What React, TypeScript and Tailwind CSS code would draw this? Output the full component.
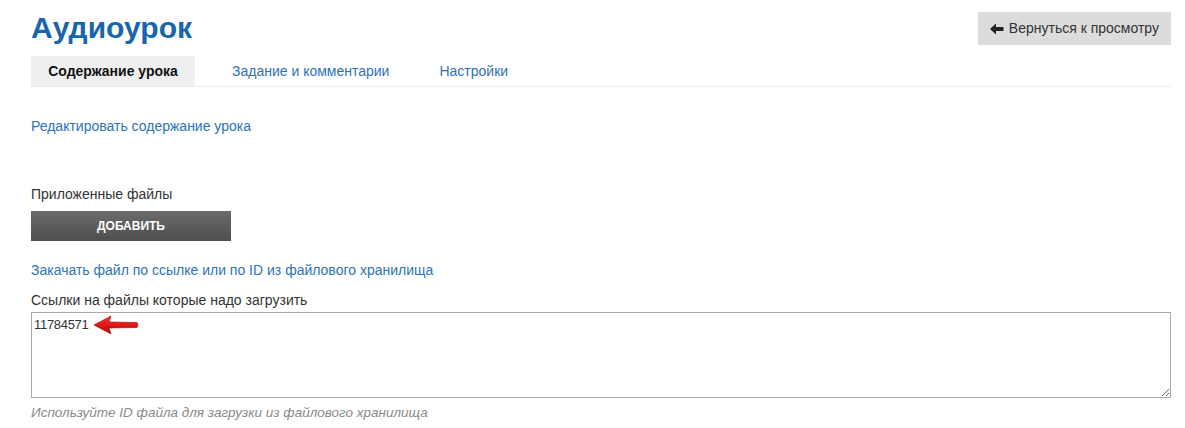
import React from 'react'

const tabs = [
  { label: 'Содержание урока', active: true, cls: '' },
  { label: 'Задание и комментарии', active: false, cls: 'ml-[37px]' },
  { label: 'Настройки', active: false, cls: 'ml-[50px]' },
]

function RedArrow() {
  return (
    <svg width="46" height="20" viewBox="0 0 46 20" className="absolute left-[62px] top-[3px]">
      <defs>
        <linearGradient id="ra" x1="0" y1="0" x2="0" y2="1">
          <stop offset="0" stopColor="#ff3030" />
          <stop offset="1" stopColor="#c00000" />
        </linearGradient>
      </defs>
      <path
        d="M1 10 L18 1 L16 7 L44 7.5 L45 10 L44 12.5 L16 13 L18 19 Z"
        fill="url(#ra)"
        stroke="#a80000"
        strokeWidth="0.6"
        strokeLinejoin="round"
      />
    </svg>
  )
}

export default function App() {
  return (
    <div className="min-h-[428px] bg-white pl-[31px] pr-[14px] text-[14px] text-[#333]" style={{ fontFamily: '"Liberation Sans", Arial, sans-serif' }}>
      {/* Header */}
      <div className="flex items-start justify-between pt-[10px]">
        <h1 className="mt-[1px] text-[30px] font-bold leading-[34px] text-[#1766ad]">Аудиоурок</h1>
        <button className="mt-[2px] flex h-[33px] items-center gap-[5px] bg-[#dcdcdc] px-[12px] text-[14px] text-[#333]">
          <svg width="14" height="12" viewBox="0 0 14 12">
            <path d="M0 6 L6 0.5 L6 4 L13.5 4 L13.5 8 L6 8 L6 11.5 Z" fill="#222" />
          </svg>
          Вернуться к просмотру
        </button>
      </div>

      {/* Tabs */}
      <div className="mt-[11px] flex border-b border-[#ececec]">
        {tabs.map((tab) =>
          tab.active ? (
            <div key={tab.label} className="flex h-[30px] w-[164px] items-center justify-center bg-[#efefef] font-bold text-[#111]">
              {tab.label}
            </div>
          ) : (
            <div key={tab.label} className={`flex h-[30px] items-center text-[#2f72b5] ${tab.cls}`}>
              {tab.label}
            </div>
          )
        )}
      </div>

      {/* Content */}
      <div className="pt-[30px]">
        <a className="block leading-[18px] text-[#2f72b5]">Редактировать содержание урока</a>

        <div className="mt-[50px] leading-[18px]">Приложенные файлы</div>
        <button className="mt-[8px] h-[30px] w-[200px] bg-gradient-to-b from-[#6c6c6c] to-[#4e4e4e] text-[12px] font-bold uppercase text-white">
          Добавить
        </button>

        <a className="mt-[20px] block leading-[18px] text-[#2f72b5]">Закачать файл по ссылке или по ID из файлового хранилища</a>

        <div className="mt-[12px] leading-[18px]">Ссылки на файлы которые надо загрузить</div>
        <div className="relative mt-[3px]">
          <textarea
            className="block h-[86px] w-full resize-y border border-[#a9a9a9] px-[2px] py-[3px] text-[13px] tracking-[-0.3px] leading-[18px] text-[#333] outline-none"
            style={{ fontFamily: '"Liberation Sans", Arial, sans-serif' }}
            defaultValue="11784571"
          />
          <RedArrow />
        </div>

        <div className="mt-[6px] text-[13.5px] italic leading-[18px] text-[#8a8a8a]">
          Используйте ID файла для загрузки из файлового хранилища
        </div>
      </div>
    </div>
  )
}
